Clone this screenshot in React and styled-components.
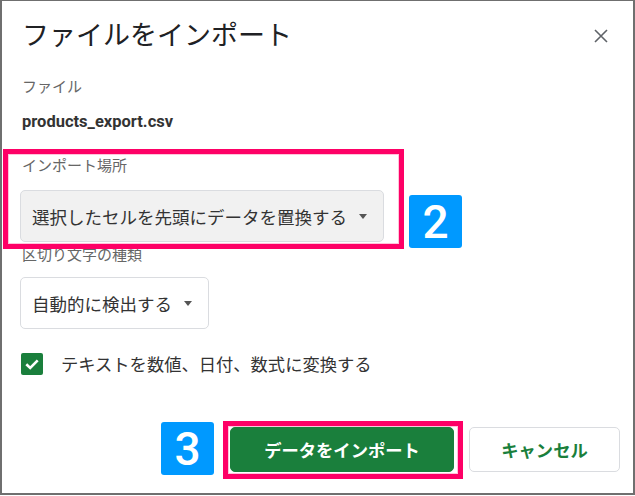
import styled, { createGlobalStyle } from 'styled-components';

const GlobalStyle = createGlobalStyle`
  html, body {
    margin: 0;
    padding: 0;
    background: #ffffff;
  }
  body {
    font-family: Roboto, "Noto Sans CJK JP", sans-serif;
  }
`;

const Frame = styled.div`
  position: relative;
  box-sizing: border-box;
  width: 635px;
  height: 495px;
  border: 2px solid #6f6f6f;
  border-top-width: 1px;
  background: #ffffff;
  display: flex;
  flex-direction: column;
  padding: 17px 12px 21px 18px;
`;

const Header = styled.div`
  display: flex;
  justify-content: space-between;
  align-items: center;
  padding-left: 2px;
  padding-right: 13px;
`;

const Title = styled.h1`
  margin: 0;
  font-size: 27px;
  line-height: 36px;
  font-weight: 400;
  color: #202124;
`;

const CloseButton = styled.button`
  display: flex;
  padding: 0;
  border: none;
  background: transparent;
  cursor: pointer;
`;

const Label = styled.div`
  margin-top: ${(p) => p.$gap}px;
  padding-left: 2px;
  font-size: 15px;
  line-height: 20px;
  color: #666666;
`;

const FileName = styled.div`
  margin-top: 15px;
  padding-left: 2px;
  font-size: 16.5px;
  line-height: 20px;
  font-weight: 700;
  color: #333333;
`;

const Select = styled.div`
  box-sizing: border-box;
  margin-top: ${(p) => p.$gap}px;
  width: ${(p) => p.$width}px;
  height: 52px;
  display: flex;
  align-items: center;
  gap: 12px;
  padding: 0 0 0 11px;
  border: 1px solid #dadce0;
  border-radius: 5px;
  background: ${(p) => (p.$filled ? '#f1f1f1' : '#ffffff')};
  font-size: 17.5px;
  color: #333333;
  white-space: nowrap;
`;

const Caret = styled.span`
  flex: none;
  width: 0;
  height: 0;
  border-left: 4.5px solid transparent;
  border-right: 4.5px solid transparent;
  border-top: 5px solid #555555;
`;

const CheckRow = styled.label`
  margin-top: 22px;
  margin-left: 1px;
  display: flex;
  align-items: center;
  gap: 18px;
  font-size: 17.3px;
  color: #333333;
`;

const CheckBox = styled.span`
  width: 22px;
  height: 22px;
  border-radius: 2px;
  background: #1a7f3c;
  display: flex;
  align-items: center;
  justify-content: center;
`;

const Footer = styled.div`
  margin-top: auto;
  display: flex;
  justify-content: flex-end;
  gap: 15px;
  padding-right: 1px;
`;

const Button = styled.button`
  box-sizing: border-box;
  width: ${(p) => p.$width}px;
  height: 45px;
  border-radius: 5px;
  font-family: inherit;
  font-size: 17.3px;
  font-weight: 700;
  cursor: pointer;
  border: 1px solid ${(p) => (p.$primary ? '#1a7f3c' : '#dadce0')};
  background: ${(p) => (p.$primary ? '#1a7f3c' : '#ffffff')};
  color: ${(p) => (p.$primary ? '#ffffff' : '#1a7f3c')};
`;

const Highlight = styled.div`
  position: absolute;
  box-sizing: border-box;
  left: ${(p) => p.$x}px;
  top: ${(p) => p.$y}px;
  width: ${(p) => p.$w}px;
  height: ${(p) => p.$h}px;
  border: 5px solid #fe0066;
  box-shadow: inset 0 0 0 1px #ffc4da;
  pointer-events: none;
`;

const StepBadge = styled.div`
  position: absolute;
  left: ${(p) => p.$x}px;
  top: ${(p) => p.$y}px;
  width: 53px;
  height: 53px;
  border-radius: 3px;
  background: #0099ff;
  color: #ffffff;
  display: flex;
  align-items: center;
  justify-content: center;
  font-family: Roboto, sans-serif;
  font-size: 46px;
  font-weight: 500;
`;

export default function App() {
  return (
    <>
      <GlobalStyle />
      <Frame>
        <Header>
          <Title>ファイルをインポート</Title>
          <CloseButton aria-label="閉じる">
            <svg width="14" height="14" viewBox="0 0 14 14">
              <path d="M1 1L13 13M13 1L1 13" stroke="#5f6368" strokeWidth="1.6" fill="none" />
            </svg>
          </CloseButton>
        </Header>

        <Label $gap={23}>ファイル</Label>
        <FileName>products_export.csv</FileName>

        <Label $gap={24}>インポート場所</Label>
        <Select $gap={14} $width={364} $filled>
          <span>選択したセルを先頭にデータを置換する</span>
          <Caret />
        </Select>

        <Label $gap={3}>区切り文字の種類</Label>
        <Select $gap={12} $width={189}>
          <span>自動的に検出する</span>
          <Caret />
        </Select>

        <CheckRow>
          <CheckBox>
            <svg width="16" height="16" viewBox="0 0 16 16">
              <path d="M2.3 8.3L6.2 12L13.7 4.3" stroke="#ffffff" strokeWidth="2.6" fill="none" />
            </svg>
          </CheckBox>
          テキストを数値、日付、数式に変換する
        </CheckRow>

        <Footer>
          <Button $primary $width={224}>データをインポート</Button>
          <Button $width={151}>キャンセル</Button>
        </Footer>

        <Highlight $x={1} $y={148} $w={401} $h={100} />
        <StepBadge $x={407} $y={194}>2</StepBadge>
        <Highlight $x={221} $y={420} $w={240} $h={58} />
        <StepBadge $x={159} $y={421}>3</StepBadge>
      </Frame>
    </>
  );
}
